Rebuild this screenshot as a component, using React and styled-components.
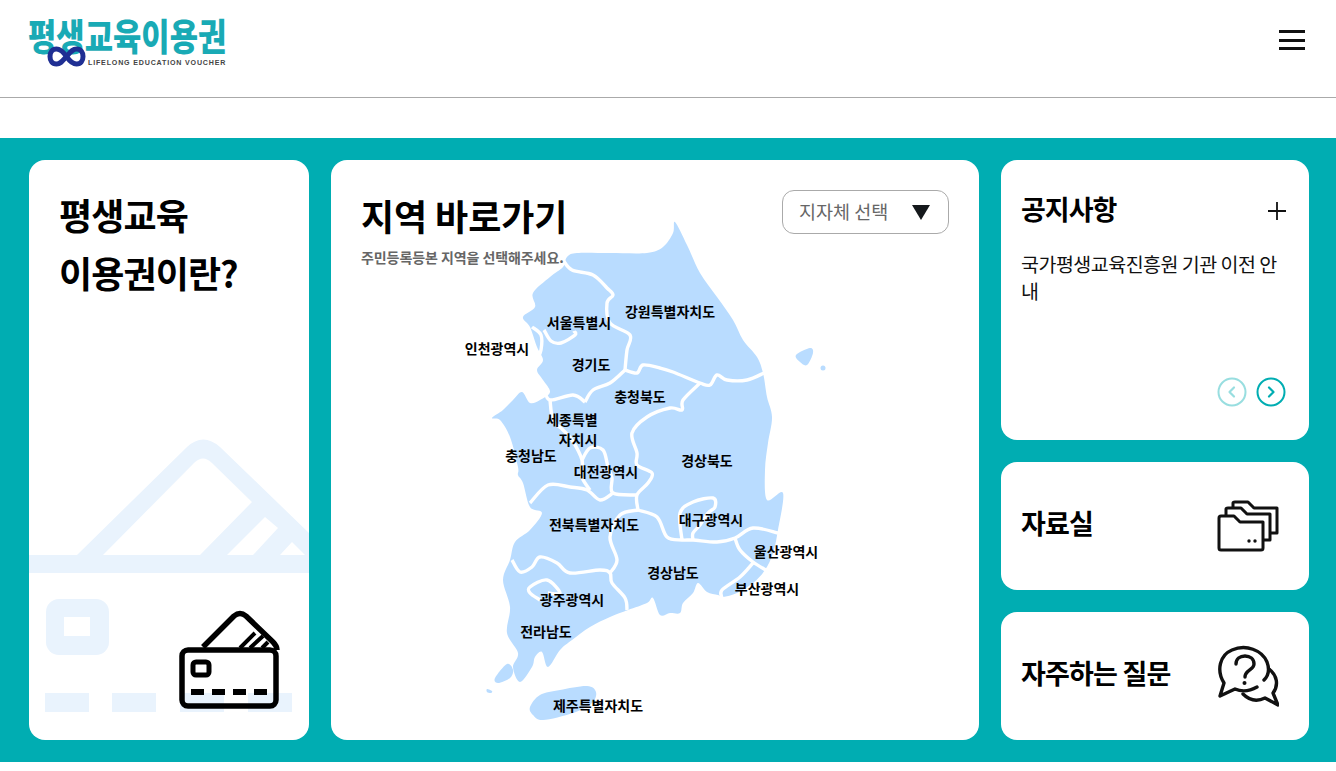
import styled, { createGlobalStyle } from 'styled-components';

const TEAL = '#00adb2';
const LAND = '#b9dcff';
const TINT = '#e9f3fd';
const KR = `'Noto Sans CJK KR', 'Noto Sans', sans-serif`;

const GlobalStyle = createGlobalStyle`
	html, body { margin: 0; padding: 0; background: #fff; }
	body { font-family: ${KR}; color: #000; }
	* { box-sizing: border-box; }
`;

const Page = styled.div`
	min-height: 100vh;
`;

const Header = styled.header`
	height: 98px;
	padding: 0 31px 0 29px;
	display: flex;
	justify-content: space-between;
	align-items: flex-start;
	border-bottom: 1px solid #aaa;
`;

const Logo = styled.div`
	position: relative;
	width: 197px;
	height: 70px;
`;

const LogoWord = styled.div`
	position: absolute;
	left: -1px;
	top: 14px;
	font-size: 30.8px;
	line-height: 42px;
	font-weight: 900;
	letter-spacing: 0;
	color: #19aab5;
	white-space: nowrap;
	transform: scaleY(1.2);
`;

const LogoSub = styled.div`
	position: absolute;
	left: 59px;
	top: 58px;
	font: 700 7.1px/10px 'Liberation Sans', sans-serif;
	letter-spacing: 0.82px;
	color: #444;
	white-space: nowrap;
`;

const LogoMark = styled.svg`
	position: absolute;
	left: 18px;
	top: 40px;
`;

const Burger = styled.button`
	margin-top: 30px;
	width: 26px;
	height: 20px;
	padding: 0;
	border: none;
	background: none;
	display: flex;
	flex-direction: column;
	justify-content: space-between;
	span {
		display: block;
		height: 3px;
		background: #111;
	}
`;

const Main = styled.main`
	margin-top: 40px;
	padding: 22px 27px 22px 29px;
	background: ${TEAL};
	display: grid;
	grid-template-columns: 280px 648px 308px;
	grid-template-rows: 280px 128px 128px;
	gap: 22px;
`;

const Card = styled.section`
	position: relative;
	background: #fff;
	border-radius: 16px;
	overflow: hidden;
`;

const IntroCard = styled(Card)`
	grid-row: 1 / 4;
	padding: 25px 30px;
`;

const MapCard = styled(Card)`
	grid-row: 1 / 4;
	padding: 26px 30px;
`;

const BigTitle = styled.h2`
	position: relative;
	margin: 0;
	font-size: 36px;
	line-height: 58px;
	font-weight: 700;
	letter-spacing: -0.9px;
`;

const MapTitle = styled(BigTitle)`
	letter-spacing: -0.1px;
`;

const Sub = styled.p`
	position: relative;
	z-index: 1;
	margin: 3px 0 0;
	font-size: 14px;
	line-height: 20px;
	font-weight: 700;
	letter-spacing: -0.08px;
	color: #666;
`;

const Drawing = styled.svg`
	position: absolute;
	left: 0;
	top: 0;
	width: 100%;
	height: 100%;
`;

const Picker = styled.div`
	position: absolute;
	z-index: 2;
	top: 30px;
	right: 30px;
	width: 167px;
	height: 44px;
	padding: 0 18px 3px 16px;
	display: flex;
	align-items: center;
	justify-content: space-between;
	background: #fff;
	border: 1px solid #aaa;
	border-radius: 12px;
	font-size: 18.5px;
	color: #666;
	i {
		width: 0;
		height: 0;
		margin-top: 3px;
		border-left: 9px solid transparent;
		border-right: 9px solid transparent;
		border-top: 15px solid #15191c;
	}
`;

const Region = styled.span`
	position: absolute;
	left: ${({ $x }) => $x}px;
	top: ${({ $y }) => $y}px;
	transform: translate(-50%, -50%);
	font-size: 14px;
	line-height: 20px;
	font-weight: 700;
	letter-spacing: 0;
	white-space: nowrap;
	color: #000;
`;

const NoticeCard = styled(Card)`
	padding: 26px 20px;
`;

const NoticeHead = styled.div`
	display: flex;
	justify-content: space-between;
	align-items: center;
	height: 44px;
	h3 {
		margin: 0;
		font-size: 27px;
		font-weight: 700;
		letter-spacing: -1px;
	}
	svg {
		margin: 6px 3px 0 0;
	}
`;

const NoticeText = styled.p`
	margin: 20px 0 0;
	font-size: 19.5px;
	line-height: 27px;
	letter-spacing: -0.5px;
	color: #111;
`;

const Pager = styled.div`
	position: absolute;
	right: 23px;
	bottom: 33px;
	display: flex;
	gap: 9px;
`;

const PageDot = styled.svg`
	display: block;
	opacity: ${({ $off }) => ($off ? 0.4 : 1)};
`;

const LinkCard = styled(Card)`
	padding: 0 30px 0 20px;
	display: flex;
	align-items: center;
	justify-content: space-between;
	h3 {
		margin: 0 0 8px;
		font-size: 27px;
		font-weight: 700;
		letter-spacing: -0.8px;
	}
`;

// Catmull-Rom through the points read off the reference
const smooth = (pts, close = false) => {
	const n = pts.length;
	const at = i => (close ? pts[(i + n) % n] : pts[Math.max(0, Math.min(n - 1, i))]);
	let d = `M${pts[0][0]} ${pts[0][1]}`;
	const last = close ? n : n - 1;
	for (let i = 0; i < last; i++) {
		const [p0, p1, p2, p3] = [at(i - 1), at(i), at(i + 1), at(i + 2)];
		const c1 = [p1[0] + (p2[0] - p0[0]) / 6, p1[1] + (p2[1] - p0[1]) / 6];
		const c2 = [p2[0] - (p3[0] - p1[0]) / 6, p2[1] - (p3[1] - p1[1]) / 6];
		d += `C${c1[0].toFixed(1)} ${c1[1].toFixed(1)} ${c2[0].toFixed(1)} ${c2[1].toFixed(1)} ${p2[0]} ${p2[1]}`;
	}
	return d + (close ? 'Z' : '');
};

const MAINLAND = [
	[567, 257], [577, 253], [610, 253], [647, 253], [663, 247], [673, 233], [675, 222], [687, 245], [700, 273], [717, 297],
	[733, 320], [743, 340], [757, 357], [763, 373], [767, 397], [772, 417], [768, 443], [765, 470], [767, 500], [783, 493],
	[778, 530], [773, 553], [765, 570], [753, 583], [737, 593], [723, 597], [718, 595], [707, 592], [698, 583], [693, 593],
	[683, 603], [680, 613], [670, 613], [660, 615], [653, 598], [647, 603], [628, 610], [610, 617], [590, 627], [572, 640],
	[560, 650], [548, 667], [542, 652], [535, 657], [532, 667], [520, 682], [513, 667], [518, 653], [507, 633], [510, 607],
	[503, 580], [510, 560], [515, 542], [530, 530], [542, 513], [530, 507], [523, 483], [518, 475], [518, 467], [510, 437],
	[500, 420], [492, 418], [503, 410], [513, 400], [522, 392], [530, 403], [540, 400], [550, 392], [543, 380], [537, 370],
	[543, 360], [537, 347], [530, 327], [523, 317], [535, 307], [533, 293], [550, 277], [563, 267],
];

const ISLANDS = [
	[[796, 355], [810, 348], [813, 353], [807, 365], [800, 362]],
	[[530, 707], [540, 695], [560, 690], [587, 686], [596, 692], [592, 703], [573, 713], [543, 720], [533, 715]],
	[[495, 678], [507, 664], [513, 670], [510, 678], [498, 683]],
	[[487, 689], [492, 691], [491, 693], [487, 692]],
];

const BORDERS = [
	[[563, 260], [572, 270], [593, 275], [607, 288], [613, 295], [607, 303], [610, 323], [630, 335], [627, 350], [625, 370]],
	[[625, 370], [637, 373], [643, 365], [660, 368], [673, 372], [700, 383], [710, 385], [717, 375], [727, 380], [747, 380], [764, 373]],
	[[625, 370], [610, 383], [593, 390], [585, 402]],
	[[585, 402], [573, 395], [550, 400], [545, 390]],
	[[700, 383], [683, 400], [682, 410], [670, 408], [647, 417], [632, 433], [637, 453], [637, 465], [652, 473], [648, 483], [637, 495], [638, 510]],
	[[550, 400], [553, 420], [563, 430], [572, 440], [582, 460], [582, 477], [590, 490]],
	[[582, 460], [590, 448], [603, 450], [608, 467], [612, 478], [613, 493], [637, 495]],
	[[530, 503], [548, 485], [570, 487], [587, 490], [600, 500], [613, 493]],
	[[638, 510], [620, 515], [610, 537], [617, 560], [610, 573]],
	[[512, 560], [520, 572], [532, 567], [540, 557], [557, 563], [570, 573], [600, 570], [610, 573], [612, 583], [625, 598], [627, 610]],
	[[548, 593], [560, 593], [547, 580], [530, 587], [530, 593], [540, 600]],
	[[638, 510], [657, 517], [667, 537], [682, 540], [693, 540], [717, 542], [735, 538], [753, 528], [778, 533]],
	[[682, 540], [680, 513], [693, 502], [713, 498], [715, 507], [708, 513], [700, 525], [693, 533], [693, 540]],
	[[735, 538], [740, 550], [753, 562], [766, 570]],
	[[753, 563], [740, 577], [722, 590], [722, 598]],
	[[544, 330], [551, 341], [561, 343], [575, 335], [574, 331]],
	[[532, 327], [541, 335], [541, 350], [537, 360]],
];

const REGIONS = [
	['서울특별시', 248, 162],
	['강원특별자치도', 339, 151],
	['인천광역시', 166, 188],
	['경기도', 260, 204],
	['충청북도', 309, 236],
	['세종특별', 241, 259],
	['자치시', 247, 279],
	['충청남도', 200, 295],
	['대전광역시', 275, 311],
	['경상북도', 376, 300],
	['전북특별자치도', 263, 364],
	['대구광역시', 380, 359],
	['울산광역시', 455, 391],
	['경상남도', 342, 412],
	['부산광역시', 436, 428],
	['광주광역시', 241, 439],
	['전라남도', 215, 471],
	['제주특별자치도', 267, 545],
];

const CardWatermark = () => (
	<Drawing viewBox="29 160 280 580" preserveAspectRatio="none">
		<path fill={TINT} d="M77 555L187 447Q203 432 220 447L309 533V573H29V555Z" />
		<path fill="#fff" d="M103 555L194 463Q203 454 212 463L252 502L200 555Z" />
		<path fill="#fff" d="M227 555L265 517L278 528L253 555Z" />
		<path fill="#fff" d="M280 555L292 542L305 555Z" />
		<rect x="46" y="599" width="63" height="56" rx="13" fill={TINT} />
		<rect x="64" y="617" width="26" height="19" fill="#fff" />
		{[45, 112, 180, 248].map(x => (
			<rect key={x} x={x} y="693" width="44" height="19" fill={TINT} />
		))}
	</Drawing>
);

const CardIcon = styled.svg`
	position: absolute;
	left: 150px;
	top: 450px;
`;

const KoreaMap = () => (
	<Drawing viewBox="331 160 648 580" preserveAspectRatio="none">
		<path d={smooth(MAINLAND, true)} fill={LAND} />
		{ISLANDS.map((pts, i) => (
			<path key={i} d={smooth(pts, true)} fill={LAND} />
		))}
		<circle cx="823" cy="368" r="2.5" fill={LAND} />
		{BORDERS.map((pts, i) => (
			<path key={i} d={smooth(pts)} fill="none" stroke="#fff" strokeWidth="3.4" strokeLinejoin="round" />
		))}
	</Drawing>
);

const Chevron = ({ dir, off }) => (
	<PageDot $off={off} width="30" height="30" viewBox="0 0 30 30" fill="none" stroke={TEAL}>
		<circle cx="15" cy="15" r="13.5" strokeWidth="2" />
		<path d={dir === 'left' ? 'M17 10.5L12.5 15L17 19.5' : 'M13 10.5L17.5 15L13 19.5'} strokeWidth="2.2" strokeLinecap="round" strokeLinejoin="round" />
	</PageDot>
);

const App = () => (
	<Page>
		<GlobalStyle />
		<Header>
			<Logo>
				<LogoWord>평생교육이용권</LogoWord>
				<LogoMark width="40" height="30" viewBox="0 0 40 30" fill="none">
					<path d="M19.5 16.500C15 10 12.500 9 9.500 9C5 9 3 12.500 3 16.500C3 20.500 5 24 9.500 24C13.500 24 15.500 21 19.500 16.500C23.500 12 25.500 9 29.500 9C34 9 36 12.500 36 16.500C36 20.500 34 24 29.500 24C26.500 24 24 23 19.500 16.500Z" stroke="#1f2f93" strokeWidth="5" />
				</LogoMark>
				<LogoSub>LIFELONG EDUCATION VOUCHER</LogoSub>
			</Logo>
			<Burger aria-label="menu">
				<span />
				<span />
				<span />
			</Burger>
		</Header>
		<Main>
			<IntroCard>
				<CardWatermark />
				<BigTitle>
					평생교육
					<br />
					이용권이란?
				</BigTitle>
				<CardIcon width="102" height="102" viewBox="179 610 102 102" fill="none" stroke="#000" strokeWidth="5.500">
					<path d="M203 647L234 616Q240 611 246 616L273 642Q277 646 277 650" strokeLinejoin="round" />
					<path d="M240 648L255 633M250 648L263 636M262 648L268 642" strokeWidth="4" />
					<rect x="182" y="650" width="94" height="56" rx="6" fill="none" />
					<rect x="193" y="662" width="16" height="13" rx="3" strokeWidth="5" />
					<path d="M191 692H204M212 692H225M233 692H246M254 692H267" strokeWidth="6" />
				</CardIcon>
			</IntroCard>
			<MapCard>
				<KoreaMap />
				<MapTitle>지역 바로가기</MapTitle>
				<Sub>주민등록등본 지역을 선택해주세요.</Sub>
				<Picker>
					지자체 선택
					<i />
				</Picker>
				{REGIONS.map(([name, x, y]) => (
					<Region key={name} $x={x} $y={y}>
						{name}
					</Region>
				))}
			</MapCard>
			<NoticeCard>
				<NoticeHead>
					<h3>공지사항</h3>
					<svg width="18" height="18" viewBox="0 0 18 18" stroke="#111" strokeWidth="1.800">
						<path d="M9 0V18M0 9H18" />
					</svg>
				</NoticeHead>
				<NoticeText>국가평생교육진흥원 기관 이전 안내</NoticeText>
				<Pager>
					<Chevron dir="left" off />
					<Chevron dir="right" />
				</Pager>
			</NoticeCard>
			<LinkCard>
				<h3>자료실</h3>
				<svg width="62" height="54" viewBox="1217 500 62 54" fill="none" stroke="#111" strokeWidth="3" strokeLinejoin="round">
					<path d="M1219 519Q1219 517 1221 517H1234L1240 523H1263V549Q1263 551 1261 551H1221Q1219 551 1219 549Z" />
					<path d="M1226 516V510Q1226 509 1228 509H1241L1247 515H1270V541H1263" />
					<path d="M1233 508V504Q1233 503 1235 503H1248L1254 509H1277V534H1270" />
					<circle cx="1249" cy="542" r="1.700" fill="#111" stroke="none" />
					<circle cx="1255" cy="542" r="1.700" fill="#111" stroke="none" />
				</svg>
			</LinkCard>
			<LinkCard>
				<h3>자주하는 질문</h3>
				<svg width="62" height="62" viewBox="1217 645 62 62" fill="none" stroke="#111" strokeWidth="3.400" strokeLinejoin="round" strokeLinecap="round">
					<path d="M1257 687C1250 691 1242 692 1235 689L1220 696L1224 683C1216 670 1220 655 1232 650C1246 644 1262 650 1267 662C1270 670 1268 676 1264 680" />
					<path d="M1269 669C1277 675 1279 685 1273 693L1278 705L1265 698C1257 702 1249 700 1243 694" />
					<path d="M1236 664C1236 659 1240 656 1245 656C1250 656 1254 659 1254 664C1254 670 1245 670 1245 677" />
					<circle cx="1244.500" cy="683" r="2" fill="#111" stroke="none" />
				</svg>
			</LinkCard>
		</Main>
	</Page>
);

export default App;
